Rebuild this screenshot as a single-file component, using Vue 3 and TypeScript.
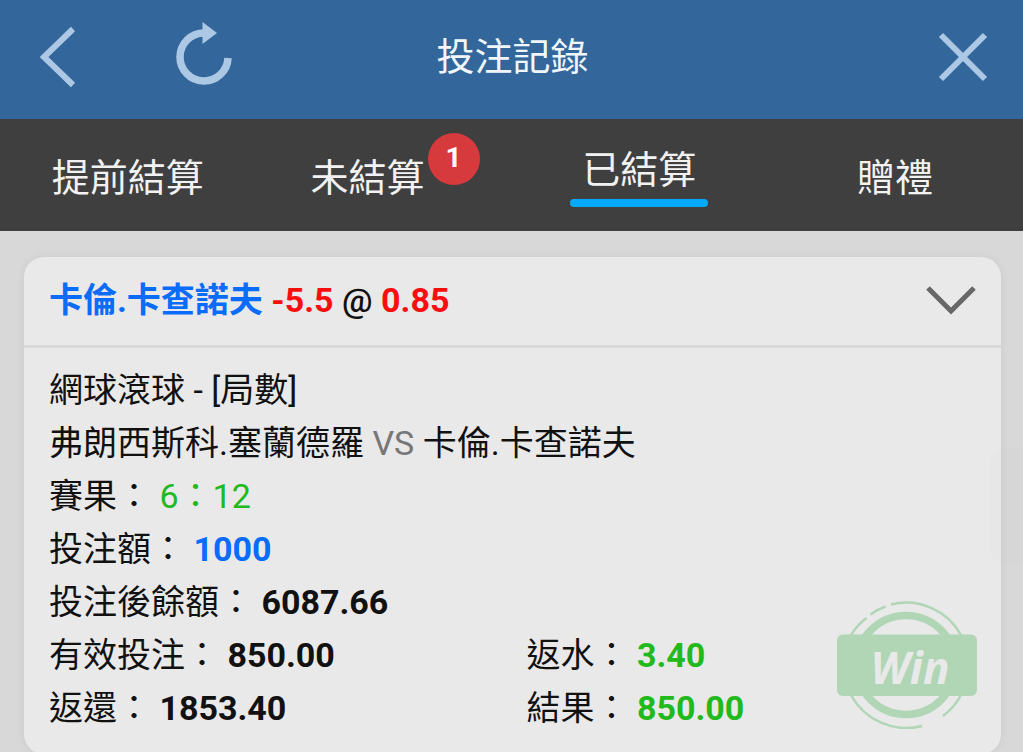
<script setup lang="ts">
import { ref } from 'vue'

interface Tab {
  id: string
  label: string
  count?: number
}

const tabs: Tab[] = [
  { id: 'early', label: '提前結算' },
  { id: 'open', label: '未結算', count: 1 },
  { id: 'settled', label: '已結算' },
  { id: 'gift', label: '贈禮' },
]

const active = ref('settled')
const expanded = ref(true)
</script>

<template>
  <div class="page">
    <header class="topbar">
      <div class="actions">
        <button type="button" class="icon-btn" aria-label="返回">
          <svg width="40" height="64" viewBox="0 0 40 64">
            <path d="M36 4 7 32 36 60" fill="none" stroke="currentColor" stroke-width="6" />
          </svg>
        </button>
        <button type="button" class="icon-btn" aria-label="重新整理">
          <svg width="60" height="72" viewBox="0 0 60 72">
            <path d="M31 12A24 24 0 1 0 55 37" fill="none" stroke="currentColor" stroke-width="7.500" />
            <path d="M29.500 1 44 12 29.500 23Z" fill="currentColor" />
          </svg>
        </button>
      </div>
      <h1 class="title">投注記錄</h1>
      <div class="actions end">
        <button type="button" class="icon-btn" aria-label="關閉">
          <svg width="50" height="50" viewBox="0 0 50 50">
            <path d="M3 3 47 47M47 3 3 47" fill="none" stroke="currentColor" stroke-width="6" />
          </svg>
        </button>
      </div>
    </header>

    <nav class="tabs">
      <button
        v-for="tab in tabs"
        :key="tab.id"
        type="button"
        class="tab"
        :class="{ active: tab.id === active, counted: tab.count }"
        @click="active = tab.id"
      >
        <span class="tab-label">
          {{ tab.label }}<span v-if="tab.count" class="badge">{{ tab.count }}</span>
        </span>
      </button>
    </nav>

    <main class="list">
      <article class="card">
        <div class="card-head">
          <h2 class="pick">
            <span class="blue">卡倫.卡查諾夫</span> <span class="red">-5.5</span> <span class="at">@</span> <span class="red">0.85</span>
          </h2>
          <button type="button" class="toggle" aria-label="展開" :aria-expanded="expanded" @click="expanded = !expanded">
            <svg width="50" height="30" viewBox="0 0 50 30">
              <path d="M2 3 25 26 48 3" fill="none" stroke="currentColor" stroke-width="5" />
            </svg>
          </button>
        </div>
        <div v-if="expanded" class="card-body">
          <p>網球滾球 - [局數]</p>
          <p>弗朗西斯科.塞蘭德羅 <span class="vs">VS</span> 卡倫.卡查諾夫</p>
          <p>賽果： <span class="green">6：12</span></p>
          <p>投注額： <b class="blue">1000</b></p>
          <p>投注後餘額： <b>6087.66</b></p>
          <div class="pair">
            <p>有效投注： <b>850.00</b></p>
            <p>返水： <b class="green">3.40</b></p>
            <p>返還： <b>1853.40</b></p>
            <p>結果： <b class="green">850.00</b></p>
          </div>
          <svg class="stamp" width="140" height="128" viewBox="0 0 140 128" role="img" aria-label="Win">
            <g fill="none" stroke="#b0d6b6">
              <circle cx="69" cy="64" r="49.500" stroke-width="7.500" />
              <g stroke-width="2.500">
                <path d="M14 34A63 63 0 0 1 29.500 17" />
                <path d="M33.500 13.500A63 63 0 0 1 48.500 5.500" />
                <path d="M54 3.500A63 63 0 0 1 124 34" />
                <path d="M14 94A63 63 0 0 0 85 125" />
                <path d="M106 115A63 63 0 0 0 124 94" />
              </g>
            </g>
            <rect y="33.500" width="140" height="61.500" rx="6" fill="#b0d6b6" />
            <text x="73" y="83" text-anchor="middle" class="stamp-text">Win</text>
          </svg>
        </div>
      </article>
    </main>

    <div class="edge-handle"></div>
  </div>
</template>

<style>
html {
  scrollbar-width: none;
}

body {
  margin: 0;
  background: #d8d8d8;
}
</style>

<style scoped>
.page {
  position: relative;
  min-height: 100vh;
  overflow-x: hidden;
  font-family: Roboto, "Noto Sans CJK TC", sans-serif;
  color: #111;
  background: #d8d8d8;
}

button {
  margin: 0;
  padding: 0;
  border: 0;
  background: none;
  font: inherit;
  color: inherit;
  cursor: pointer;
}

svg {
  display: block;
}

.topbar {
  display: grid;
  grid-template-columns: 1fr auto 1fr;
  align-items: center;
  box-sizing: border-box;
  height: 119px;
  padding: 0 35px 5px 37px;
  background: #33679b;
}

.actions {
  display: flex;
  align-items: center;
  gap: 96px;
}

.actions.end {
  justify-content: flex-end;
}

.icon-btn {
  color: #adc8e5;
}

.title {
  margin: 0;
  font-size: 38px;
  line-height: 56px;
  font-weight: 400;
  color: #f0f6fc;
}

.tabs {
  display: grid;
  grid-template-columns: repeat(4, 1fr);
  height: 112px;
  background: #3f3f3f;
}

.tab {
  display: flex;
  align-items: center;
  justify-content: center;
  padding-top: 6px;
  font-size: 38px;
  line-height: 56px;
  color: #f2f2f2;
}

.tab.counted {
  padding-right: 32px;
}

.tab.active {
  padding-top: 0;
  padding-bottom: 2px;
}

.tab-label {
  position: relative;
  padding: 0 12px;
}

.tab.active .tab-label {
  padding-bottom: 1px;
  border-bottom: 8px solid transparent;
}

.tab.active .tab-label::after {
  content: "";
  position: absolute;
  left: 0;
  right: 0;
  bottom: -8px;
  height: 8px;
  border-radius: 4px;
  background: #03a9ff;
}

.badge {
  position: absolute;
  left: 100%;
  top: -17px;
  width: 52px;
  height: 52px;
  margin-left: -9px;
  border-radius: 50%;
  background: #d63a3c;
  color: #fff;
  font-size: 28px;
  line-height: 50px;
  font-weight: 700;
  text-align: center;
}

.list {
  padding: 26px 22px 0 24px;
}

.card {
  border-radius: 20px;
  background: #e9e9e9;
  box-shadow: 0 0 10px rgba(0, 0, 0, 0.06);
}

.card-head {
  display: flex;
  align-items: center;
  justify-content: space-between;
  box-sizing: border-box;
  height: 91px;
  padding: 0 25px 3px;
  border-bottom: 3px solid #d9d9d9;
}

.pick {
  margin: 0;
  font-size: 34px;
  line-height: 50px;
  font-weight: 700;
}

.at {
  font-weight: 500;
}

.toggle {
  color: #686868;
}

.card-body {
  position: relative;
  padding: 16px 25px 19px;
  font-size: 34px;
  line-height: 53px;
}

.card-body p {
  margin: 0;
}

.pair {
  display: grid;
  grid-template-columns: 1fr 1fr;
  column-gap: 28px;
}

.blue {
  color: #0a6cff;
}

.red {
  color: #ff0d0d;
}

.green {
  color: #22b91d;
}

.vs {
  color: #777;
}

.stamp {
  position: absolute;
  right: 24px;
  bottom: 25px;
}

.stamp-text {
  font-family: "Open Sans", sans-serif;
  font-size: 44px;
  font-style: italic;
  font-weight: 700;
  fill: #e9e9e9;
}

.edge-handle {
  position: absolute;
  top: 447px;
  right: 0;
  width: 34px;
  height: 118px;
  border-radius: 18px 0 0 18px;
  background: rgba(0, 0, 0, 0.008);
}
</style>
